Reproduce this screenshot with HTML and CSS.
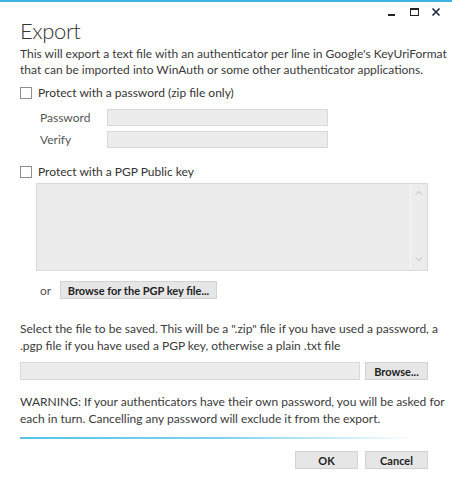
FILE: index.html
```html
<!DOCTYPE html>
<html>
<head>
<meta charset="utf-8">
<link rel="stylesheet" href="styles.css">
</head>
<body>
<div class="window">
  <div class="controls">
    <svg class="ctl" width="12" height="12" viewBox="0 0 12 12"><rect x="2" y="8" width="7" height="2" fill="#222"/></svg>
    <svg class="ctl" width="12" height="12" viewBox="0 0 12 12"><rect x="2.5" y="2.5" width="8" height="7" fill="none" stroke="#222" stroke-width="1"/><rect x="2" y="2" width="9" height="2" fill="#222"/></svg>
    <svg class="ctl" width="12" height="12" viewBox="0 0 12 12"><path d="M2.5 2.5 L9.5 9.5 M9.5 2.5 L2.5 9.5" stroke="#1a2a40" stroke-width="1.6"/></svg>
  </div>
  <div class="content">
    <h1 class="title">Export</h1>
    <p class="desc">This will export a text file with an authenticator per line in Google's KeyUriFormat<br>that can be imported into WinAuth or some other authenticator applications.</p>

    <label class="check check-pw"><span class="box"></span>Protect with a password (zip file only)</label>
    <div class="pw-grid">
      <span class="lbl">Password</span><span class="input"></span>
      <span class="lbl">Verify</span><span class="input"></span>
    </div>

    <label class="check check-pgp"><span class="box"></span>Protect with a PGP Public key</label>
    <div class="textarea">
      <div class="ta-body"></div>
      <div class="scroll">
        <svg width="8" height="6" viewBox="0 0 8 6"><path d="M1 4.5 L4 1.5 L7 4.5" fill="none" stroke="#b8b8b8" stroke-width="1"/></svg>
        <svg width="8" height="6" viewBox="0 0 8 6"><path d="M1 1.5 L4 4.5 L7 1.5" fill="none" stroke="#b8b8b8" stroke-width="1"/></svg>
      </div>
    </div>
    <div class="or-row">
      <span class="or">or</span>
      <span class="btn btn-pgp">Browse for the PGP key file...</span>
    </div>

    <p class="desc select">Select the file to be saved. This will be a ".zip" file if you have used a password, a<br>.pgp file if you have used a PGP key, otherwise a plain .txt file</p>
    <div class="file-row">
      <span class="input file-input"></span>
      <span class="btn btn-small">Browse...</span>
    </div>

    <p class="desc warn">WARNING: If your authenticators have their own password, you will be asked for<br>each in turn. Cancelling any password will exclude it from the export.</p>
    <div class="sep"></div>
    <div class="actions">
      <span class="btn btn-small">OK</span>
      <span class="btn btn-small">Cancel</span>
    </div>
  </div>
</div>
</body>
</html>
```

FILE: styles.css
```css
* { box-sizing: border-box; }
html, body { margin: 0; padding: 0; background: #fff; }
body {
  font-family: "Lato", "Open Sans", sans-serif;
  color: #3a3a3a;
  width: 452px;
  height: 480px;
  overflow: hidden;
}
.window {
  width: 452px;
  height: 480px;
  border-top: 2px solid #3cb4e6;
  position: relative;
}
.controls {
  display: flex;
  justify-content: flex-end;
  gap: 10px;
  padding: 4px 10px 0 0;
  height: 16px;
}
.ctl { display: block; }
.content {
  padding: 0 24px 0 20px;
  display: flex;
  flex-direction: column;
}
.title {
  margin: 0;
  font-weight: 300;
  font-size: 22px;
  line-height: 26px;
  letter-spacing: -0.4px;
  color: #333;
}
.desc {
  margin: 2px 0 0 0;
  font-size: 12px;
  line-height: 16px;
  color: #3a3a3a;
  white-space: nowrap;
}
.check {
  display: flex;
  align-items: center;
  font-size: 12px;
  line-height: 16px;
  color: #333;
}
.check-pw { margin-top: 7px; }
.check-pgp { margin-top: 16px; }
.box {
  width: 12px;
  height: 12px;
  border: 1px solid #8e8e8e;
  background: #fff;
  margin-right: 6px;
  flex: none;
}
.pw-grid {
  display: grid;
  grid-template-columns: 67px 221px;
  grid-row-gap: 5px;
  align-items: center;
  margin: 8px 0 0 20px;
}
.lbl { font-size: 12px; color: #555; }
.input {
  display: block;
  height: 17px;
  background: #ececec;
  border: 1px solid #d8d8d8;
}
.textarea {
  margin: 3px 0 0 16px;
  height: 88px;
  display: flex;
  border: 1px solid #d8d8d8;
  background: #ececec;
}
.ta-body { flex: 1; }
.scroll {
  width: 17px;
  border-left: 1px solid #f6f6f6;
  display: flex;
  flex-direction: column;
  justify-content: space-between;
  align-items: center;
  padding: 6px 0 8px;
}
.scroll svg { display: block; }
.or-row {
  display: flex;
  align-items: center;
  margin: 10px 0 0 20px;
}
.or { font-size: 12px; color: #555; width: 20px; }
.btn {
  display: flex;
  align-items: center;
  justify-content: center;
  height: 18px;
  background: #e6e6e6;
  border: 1px solid #d3d3d3;
  font-weight: 700;
  font-size: 11px;
  color: #222;
}
.btn-pgp { width: 157px; }
.btn-small { width: 63px; }
.select { margin-top: 21px; line-height: 17px; }
.file-row {
  display: flex;
  gap: 5px;
  margin-top: 8px;
}
.file-input { flex: 1; height: 18px; }
.warn { margin-top: 13px; line-height: 17px; }
.sep {
  margin-top: 10px;
  height: 2px;
  width: 400px;
  background: linear-gradient(to right, #56c3ea 0%, #7dd2ef 50%, #ffffff 100%);
}
.actions {
  display: flex;
  justify-content: flex-end;
  gap: 7px;
  margin-top: 12px;
}
```
